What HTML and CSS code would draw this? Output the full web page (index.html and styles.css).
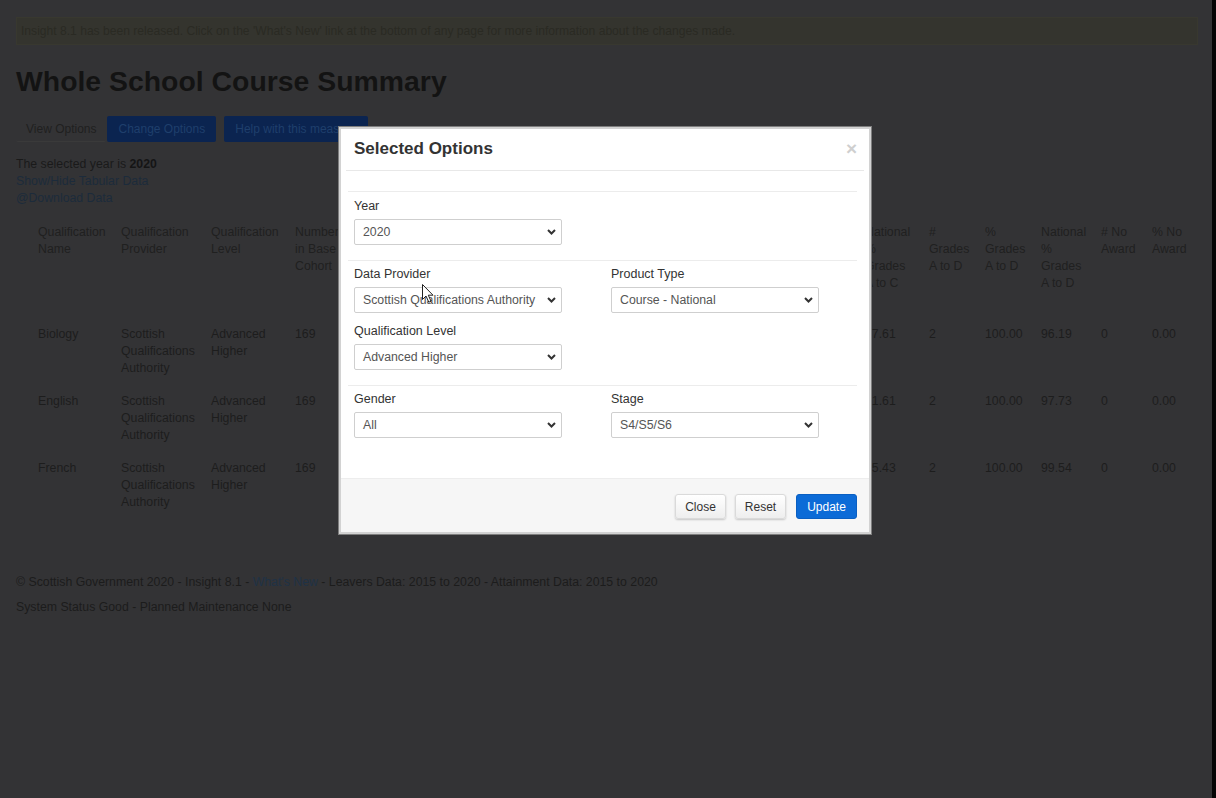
FILE: index.html
```html
<!DOCTYPE html>
<html lang="en">
<head>
<meta charset="utf-8">
<title>Whole School Course Summary</title>
<link rel="stylesheet" href="styles.css">
</head>
<body>
<div class="screen">
  <div class="page">
    <div class="alert">Insight 8.1 has been released. Click on the 'What's New' link at the bottom of any page for more information about the changes made.</div>
    <h1 class="title">Whole School Course Summary</h1>
    <div class="tabs">
      <span class="tab tab-plain">View Options</span>
      <span class="tab tab-blue">Change Options</span>
      <span class="tab tab-blue tab-gap">Help with this measure</span>
    </div>
    <div class="info">
      <div>The selected year is <b>2020</b></div>
      <div class="link">Show/Hide Tabular Data</div>
      <div class="link">@Download Data</div>
    </div>
    <div class="table-wrap">
      <table class="data">
        <colgroup>
          <col class="w83"><col class="w90"><col class="w84">
          <col class="w63"><col class="w63"><col class="w63"><col class="w63"><col class="w63"><col class="w63">
          <col class="w64"><col class="w64"><col class="w64">
          <col class="w64">
          <col class="w56"><col class="w56"><col class="w60"><col class="w51"><col class="w54">
        </colgroup>
        <thead>
          <tr>
            <th>Qualification Name</th>
            <th>Qualification Provider</th>
            <th>Qualification Level</th>
            <th>Number in Base Cohort</th>
            <th># Grades A</th>
            <th>% Grades A</th>
            <th>National % Grades A</th>
            <th># Grades A to B</th>
            <th>% Grades A to B</th>
            <th>National % Grades A to B</th>
            <th># Grades A to C</th>
            <th>% Grades A to C</th>
            <th>National % Grades A to C</th>
            <th># Grades A to D</th>
            <th>% Grades A to D</th>
            <th>National % Grades A to D</th>
            <th># No Award</th>
            <th>% No Award</th>
          </tr>
        </thead>
        <tbody>
          <tr>
            <td>Biology</td><td>Scottish Qualifications Authority</td><td>Advanced Higher</td>
            <td>169</td><td>1</td><td>50.00</td><td>33.79</td><td>2</td><td>100.00</td><td>61.28</td><td>2</td><td>100.00</td><td>87.61</td>
            <td>2</td><td>100.00</td><td>96.19</td><td>0</td><td>0.00</td>
          </tr>
          <tr>
            <td>English</td><td>Scottish Qualifications Authority</td><td>Advanced Higher</td>
            <td>169</td><td>0</td><td>0.00</td><td>22.14</td><td>1</td><td>50.00</td><td>55.02</td><td>2</td><td>100.00</td><td>91.61</td>
            <td>2</td><td>100.00</td><td>97.73</td><td>0</td><td>0.00</td>
          </tr>
          <tr>
            <td>French</td><td>Scottish Qualifications Authority</td><td>Advanced Higher</td>
            <td>169</td><td>2</td><td>100.00</td><td>49.42</td><td>2</td><td>100.00</td><td>76.37</td><td>2</td><td>100.00</td><td>95.43</td>
            <td>2</td><td>100.00</td><td>99.54</td><td>0</td><td>0.00</td>
          </tr>
        </tbody>
      </table>
    </div>
    <div class="footer">
      <p>© Scottish Government 2020 - Insight 8.1 - <span class="link">What's New</span> - Leavers Data: 2015 to 2020 - Attainment Data: 2015 to 2020</p>
      <p>System Status Good - Planned Maintenance None</p>
    </div>
  </div>
  <div class="edge"></div>
</div>

<div class="modal">
  <div class="modal-content">
    <div class="modal-header">
      <span class="modal-title">Selected Options</span>
      <span class="modal-x">×</span>
    </div>
    <div class="modal-body">
      <div class="sep sep-first"></div>
      <div class="mrow mrow-first">
        <div class="field">
          <label>Year</label>
          <div class="select"><span>2020</span><svg width="9" height="6" viewBox="0 0 9 6"><path d="M1 1 L4.5 4.5 L8 1" fill="none" stroke="#333" stroke-width="2"/></svg></div>
        </div>
      </div>
      <div class="sep"></div>
      <div class="mrow grid2">
        <div class="col">
          <div class="field">
            <label>Data Provider</label>
            <div class="select"><span>Scottish Qualifications Authority</span><svg width="9" height="6" viewBox="0 0 9 6"><path d="M1 1 L4.5 4.5 L8 1" fill="none" stroke="#333" stroke-width="2"/></svg></div>
          </div>
          <div class="field field-next">
            <label>Qualification Level</label>
            <div class="select"><span>Advanced Higher</span><svg width="9" height="6" viewBox="0 0 9 6"><path d="M1 1 L4.5 4.5 L8 1" fill="none" stroke="#333" stroke-width="2"/></svg></div>
          </div>
        </div>
        <div class="col">
          <div class="field">
            <label>Product Type</label>
            <div class="select"><span>Course - National</span><svg width="9" height="6" viewBox="0 0 9 6"><path d="M1 1 L4.5 4.5 L8 1" fill="none" stroke="#333" stroke-width="2"/></svg></div>
          </div>
        </div>
      </div>
      <div class="sep"></div>
      <div class="mrow grid2">
        <div class="field">
          <label>Gender</label>
          <div class="select"><span>All</span><svg width="9" height="6" viewBox="0 0 9 6"><path d="M1 1 L4.5 4.5 L8 1" fill="none" stroke="#333" stroke-width="2"/></svg></div>
        </div>
        <div class="field">
          <label>Stage</label>
          <div class="select"><span>S4/S5/S6</span><svg width="9" height="6" viewBox="0 0 9 6"><path d="M1 1 L4.5 4.5 L8 1" fill="none" stroke="#333" stroke-width="2"/></svg></div>
        </div>
      </div>
    </div>
    <div class="modal-footer">
      <span class="btn btn-light">Close</span>
      <span class="btn btn-light">Reset</span>
      <span class="btn btn-primary">Update</span>
    </div>
  </div>
</div>

<svg class="cursor" width="13" height="20" viewBox="0 0 13 20"><path d="M0.5 0.5 L0.5 15.5 L4 12 L6.8 18.2 L9 17.2 L6.3 11.2 L11 11.2 Z" fill="#fff" stroke="#222" stroke-width="1"/></svg>
</body>
</html>
```

FILE: styles.css
```css
* { box-sizing: border-box; }

html, body {
  margin: 0;
  padding: 0;
}

body {
  background: #333335;
  font-family: "Liberation Sans", Arial, sans-serif;
  font-size: 12.3px;
  color: #1c1c1c;
  overflow: hidden;
}

.screen {
  display: flex;
  min-height: 798px;
}

.page {
  flex: 1;
  padding: 17px 14px 0 16px;
}

.edge {
  width: 4px;
  background: #050505;
}

.alert {
  height: 28px;
  background: #34342e;
  border: 1px solid #38382f;
  padding: 0 4px;
  line-height: 26px;
  font-size: 12.1px;
  color: #2a2a23;
  white-space: nowrap;
  overflow: hidden;
}

.title {
  margin: 21px 0 0;
  font-size: 28.4px;
  line-height: 31px;
  font-weight: bold;
  color: #131313;
}

.tabs {
  display: flex;
  margin-top: 19px;
  height: 26px;
}

.tab {
  display: flex;
  align-items: center;
  padding: 0 11px;
  font-size: 12px;
  border-radius: 2px;
}

.tab-plain {
  padding: 0 10px;
  color: #202020;
  border-bottom: 1px solid #3a3a3a;
  margin-right: 1px;
}

.tab-blue {
  background: #0b2450;
  color: #1f3f6c;
}

.tab-gap {
  margin-left: 8px;
}

.info {
  margin-top: 14px;
  line-height: 17px;
  color: #1a1a1a;
}

.info b {
  color: #151515;
}

.link {
  color: #1c2b3b;
}

.table-wrap {
  margin-top: 9px;
  padding-left: 14px;
}

.data {
  border-collapse: collapse;
  table-layout: fixed;
  width: 1168px;
  line-height: 17px;
  color: #1d1d1d;
}

.w83 { width: 83px; }
.w90 { width: 90px; }
.w84 { width: 84px; }
.w63 { width: 63px; }
.w64 { width: 64px; }
.w56 { width: 56px; }
.w60 { width: 60px; }
.w51 { width: 51px; }
.w54 { width: 54px; }

.data th {
  font-weight: normal;
  text-align: left;
  vertical-align: top;
  padding: 8px 6px 26px 8px;
  color: #202020;
}

.data td {
  vertical-align: top;
  padding: 8px 6px 8px 8px;
  height: 67px;
}

.footer {
  margin-top: 55px;
  line-height: 17px;
  color: #1c1c1c;
}

.footer p {
  margin: 0 0 8px;
}

.footer .link {
  color: #1f3246;
}

/* modal */
.modal {
  position: fixed;
  left: 338px;
  top: 126px;
  width: 534px;
  border: 1px solid #7e7e7e;
  background: #d2d2d2;
  padding: 2px;
}

.modal-content {
  background: #fff;
  color: #333;
}

.modal-header {
  display: flex;
  justify-content: space-between;
  align-items: flex-start;
  padding: 10px 7px 11px 8px;
  margin: 0 5px;
  border-bottom: 1px solid #e8e8e8;
}

.modal-title {
  font-size: 17px;
  line-height: 20px;
  font-weight: bold;
  color: #333;
}

.modal-x {
  font-size: 19px;
  line-height: 20px;
  font-weight: bold;
  color: #cfcfcf;
}

.modal-body {
  padding: 0 13px 40px;
}

.sep {
  height: 1px;
  background: #ececec;
  margin: 0 -1px 0 -6px;
}

.sep-first {
  margin-top: 20px;
}

.mrow {
  padding: 6px 0 15px;
}

.mrow-first {
  padding-top: 7px;
}

.mrow:last-child {
  padding-bottom: 0;
}

.grid2 {
  display: grid;
  grid-template-columns: 257px 208px;
}

.field {
  display: flex;
  flex-direction: column;
  width: 208px;
}

.field-next {
  margin-top: 11px;
}

.field label {
  font-size: 12.5px;
  line-height: 15px;
  color: #333;
  margin-bottom: 5px;
}

.select {
  display: flex;
  align-items: center;
  justify-content: space-between;
  height: 26px;
  border: 1px solid #cfcfcf;
  border-radius: 2px;
  padding: 0 5px 0 8px;
  font-size: 12.3px;
  color: #555;
  background: #fff;
}

.select span {
  white-space: nowrap;
}

.modal-footer {
  display: flex;
  justify-content: flex-end;
  gap: 9px;
  background: #f6f6f6;
  border-top: 1px solid #ededed;
  padding: 15px 12px 13px;
}

.btn {
  display: flex;
  align-items: center;
  justify-content: center;
  height: 25px;
  border-radius: 3px;
  font-size: 12px;
}

.btn-light {
  width: 51px;
  color: #333;
  background: linear-gradient(#ffffff, #eeeeee);
  border: 1px solid #dadada;
  box-shadow: 0 1px 2px rgba(0, 0, 0, 0.2);
}

.btn-primary {
  width: 61px;
  margin-left: 1px;
  color: #fff;
  background: #0c6bd7;
  border: 1px solid #0a5fc2;
}

.cursor {
  position: fixed;
  left: 422px;
  top: 284px;
}
```
